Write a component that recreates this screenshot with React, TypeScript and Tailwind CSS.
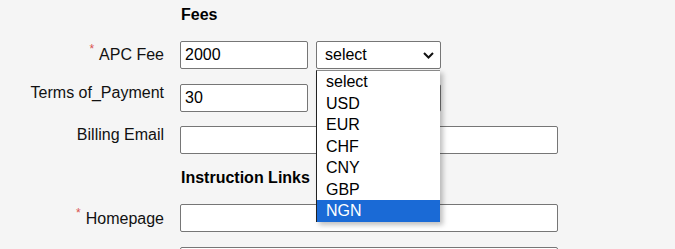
const font = { fontFamily: '"Liberation Sans", Arial, sans-serif' };

const currencies = ['select', 'USD', 'EUR', 'CHF', 'CNY', 'GBP', 'NGN'];

function Req() {
  return <span className="inline-block align-top text-[12px] leading-[12px] text-[#d9534f] mr-[5px] -mt-[3px]">*</span>;
}

function Field({ value = '', wide = false }: { value?: string; wide?: boolean }) {
  return (
    <div
      className={`h-[28px] ${wide ? 'w-[378px]' : 'w-[128px]'} bg-white border border-[#767676] rounded-[2px] px-[4px] flex items-center text-[16px] text-black`}
    >
      {value}
    </div>
  );
}

function SelectBox({ label = 'select' }: { label?: string }) {
  return (
    <div className="h-[28px] w-[125px] bg-white border border-[#767676] rounded-[2px] pl-[8px] pr-[6px] flex items-center justify-between text-[16px] text-black">
      <span>{label}</span>
      <svg width="11" height="7" viewBox="0 0 11 7" fill="none">
        <path d="M1 1l4.5 4.5L10 1" stroke="#111" strokeWidth="2" />
      </svg>
    </div>
  );
}

function Label({ text, req = false, pt }: { text: string; req?: boolean; pt: string }) {
  return (
    <div className={`w-[164px] shrink-0 text-right text-[16px] leading-[18px] text-[#111] ${pt}`}>
      {req && <Req />}
      {text}
    </div>
  );
}

export default function App() {
  return (
    <div style={font} className="w-[675px] h-[249px] overflow-hidden bg-[#f5f5f5] pt-[6px]">
      <div className="pl-[181px] text-[16px] leading-[18px] font-bold text-black">Fees</div>

      <div className="flex mt-[17px]">
        <Label text="APC Fee" req pt="pt-[5px]" />
        <div className="ml-[16px] flex gap-[8px]">
          <Field value="2000" />
          <div className="relative">
            <SelectBox />
            {/* open dropdown */}
            <div className="absolute left-0 top-[29px] w-[124px] z-10 bg-white border-t border-t-[#8a8a8a] border-l border-l-[#222] shadow-[3px_3px_5px_rgba(0,0,0,0.25)] text-[16px]">
              {currencies.map((c) => (
                <div
                  key={c}
                  className={`h-[21.5px] leading-[21.5px] pl-[9px] ${c === 'NGN' ? 'bg-[#1a6ad6] text-white' : 'text-black'}`}
                >
                  {c}
                </div>
              ))}
            </div>
          </div>
        </div>
      </div>

      <div className="flex mt-[15px]">
        <Label text="Terms of_Payment" pt="pt-[0px]" />
        <div className="ml-[16px] flex gap-[8px]">
          <Field value="30" />
          {/* covered by the open list above */}
          <SelectBox label="" />
        </div>
      </div>

      <div className="flex mt-[14px]">
        <Label text="Billing Email" pt="pt-[0px]" />
        <div className="ml-[16px]">
          <Field wide />
        </div>
      </div>

      <div className="pl-[181px] mt-[15px] text-[16px] leading-[18px] font-bold text-black">Instruction Links</div>

      <div className="flex mt-[17px]">
        <Label text="Homepage" req pt="pt-[6px]" />
        <div className="ml-[16px]">
          <Field wide />
        </div>
      </div>

      <div className="flex mt-[15px]">
        <div className="w-[164px] shrink-0" />
        <div className="ml-[16px]">
          <Field wide />
        </div>
      </div>
    </div>
  );
}
